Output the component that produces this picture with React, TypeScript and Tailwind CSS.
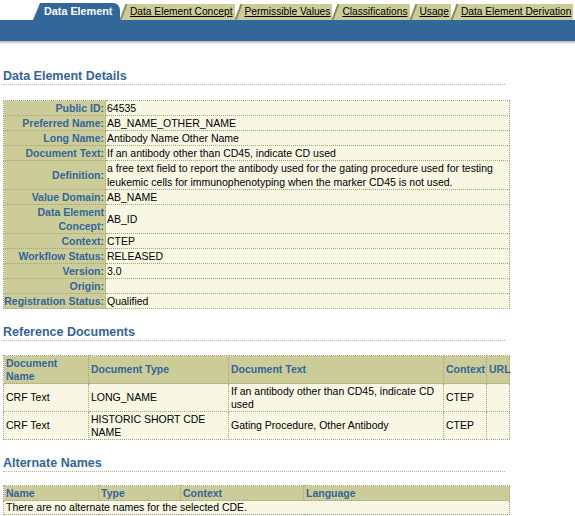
import React from 'react';

const BLUE = 'text-[#336699]';

const tabs = ['Data Element Concept', 'Permissible Values', 'Classifications', 'Usage', 'Data Element Derivation'];

const details: [string, string][] = [
  ['Public ID:', '64535'],
  ['Preferred Name:', 'AB_NAME_OTHER_NAME'],
  ['Long Name:', 'Antibody Name Other Name'],
  ['Document Text:', 'If an antibody other than CD45, indicate CD used'],
  [
    'Definition:',
    'a free text field to report the antibody used for the gating procedure used for testing leukemic cells for immunophenotyping when the marker CD45 is not used.',
  ],
  ['Value Domain:', 'AB_NAME'],
  ['Data Element Concept:', 'AB_ID'],
  ['Context:', 'CTEP'],
  ['Workflow Status:', 'RELEASED'],
  ['Version:', '3.0'],
  ['Origin:', ''],
  ['Registration Status:', 'Qualified'],
];

const refDocs = [
  ['CRF Text', 'LONG_NAME', 'If an antibody other than CD45, indicate CD used', 'CTEP', ''],
  ['CRF Text', 'HISTORIC SHORT CDE NAME', 'Gating Procedure, Other Antibody', 'CTEP', ''],
];

const cell = 'border border-dotted border-[#a3a37a] align-middle';
const head = `${cell} bg-[#cccc99] ${BLUE} font-bold text-left px-[2px] leading-[13px]`;
const val = `${cell} bg-[#f7f7e4] text-black px-[2px] leading-[13px]`;

const Heading = ({ children, mt }: { children: React.ReactNode; mt: string }) => (
  <div className={`${mt} ml-[3px] w-[502px] border-b border-dotted border-[#b8b890]`}>
    <h2 className={`${BLUE} font-bold text-[12.5px] leading-[15px]`}>{children}</h2>
  </div>
);

export default function App() {
  return (
    <div className="w-[575px] h-[516px] overflow-hidden bg-white font-['Liberation_Sans',Arial,sans-serif] text-[10.5px]">
      {/* tab strip */}
      <div className="flex items-end h-[20px] pl-[33px] overflow-hidden whitespace-nowrap">
        <div className="w-[87px] h-[17px] shrink-0 bg-[#336699] rounded-tr-[7px] [clip-path:polygon(7px_0,100%_0,100%_100%,0_100%)] pl-[11px] text-white font-bold text-[10.8px] leading-[17px]">
          Data Element
        </div>
        {tabs.map((t) => (
          <div key={t} className="h-[16px] shrink-0 flex bg-[#cccc99] pr-[2px]">
            <svg width="8" height="16" className="shrink-0">
              <polygon points="0,16 6,0 8,0 8,16" fill="#cccc99" />
              <polygon points="0,16 0,0 6,0" fill="#ffffff" />
              <line x1="0.5" y1="16" x2="6.5" y2="0" stroke="#8a8a5c" strokeWidth="2" />
            </svg>
            <span className="pl-[2px] text-black underline text-[10.2px] leading-[16px]">{t}</span>
          </div>
        ))}
      </div>
      <div className="h-[21px] bg-[#336699]" />
      <div className="h-[3px] bg-gradient-to-b from-[#b0b0b0] to-white" />

      <Heading mt="mt-[25px]">Data Element Details</Heading>
      <table className="mt-[15px] ml-[3px] w-[507px] border-collapse table-fixed">
        <colgroup>
          <col className="w-[102px]" />
          <col />
        </colgroup>
        <tbody>
          {details.map(([k, v]) => (
            <tr key={k}>
              <td className={`${cell} bg-[#cccc99] ${BLUE} font-bold text-right pr-px leading-[14px]`}>{k}</td>
              <td className={`${cell} bg-[#f7f7e4] text-black pl-px leading-[14px] h-[15px]`}>{v}</td>
            </tr>
          ))}
        </tbody>
      </table>

      <Heading mt="mt-[16px]">Reference Documents</Heading>
      <table className="mt-[14px] ml-[3px] w-[507px] border-collapse table-fixed">
        <colgroup>
          <col className="w-[85px]" />
          <col className="w-[140px]" />
          <col className="w-[215px]" />
          <col className="w-[43px]" />
          <col />
        </colgroup>
        <thead>
          <tr className="h-[28px]">
            <th className={head}>Document Name</th>
            <th className={head}>Document Type</th>
            <th className={head}>Document Text</th>
            <th className={head}>Context</th>
            <th className={head}>URL</th>
          </tr>
        </thead>
        <tbody>
          {refDocs.map((r, i) => (
            <tr key={i} className="h-[28px]">
              {r.map((c, j) => (
                <td key={j} className={val}>
                  {c}
                </td>
              ))}
            </tr>
          ))}
        </tbody>
      </table>

      <Heading mt="mt-[16px]">Alternate Names</Heading>
      <table className="mt-[13px] ml-[3px] w-[507px] border-collapse table-fixed">
        <colgroup>
          <col className="w-[95px]" />
          <col className="w-[82px]" />
          <col className="w-[123px]" />
          <col />
        </colgroup>
        <thead>
          <tr className="h-[15px]">
            <th className={head}>Name</th>
            <th className={head}>Type</th>
            <th className={head}>Context</th>
            <th className={head}>Language</th>
          </tr>
        </thead>
        <tbody>
          <tr className="h-[14px]">
            <td colSpan={4} className={val}>
              There are no alternate names for the selected CDE.
            </td>
          </tr>
        </tbody>
      </table>
    </div>
  );
}
